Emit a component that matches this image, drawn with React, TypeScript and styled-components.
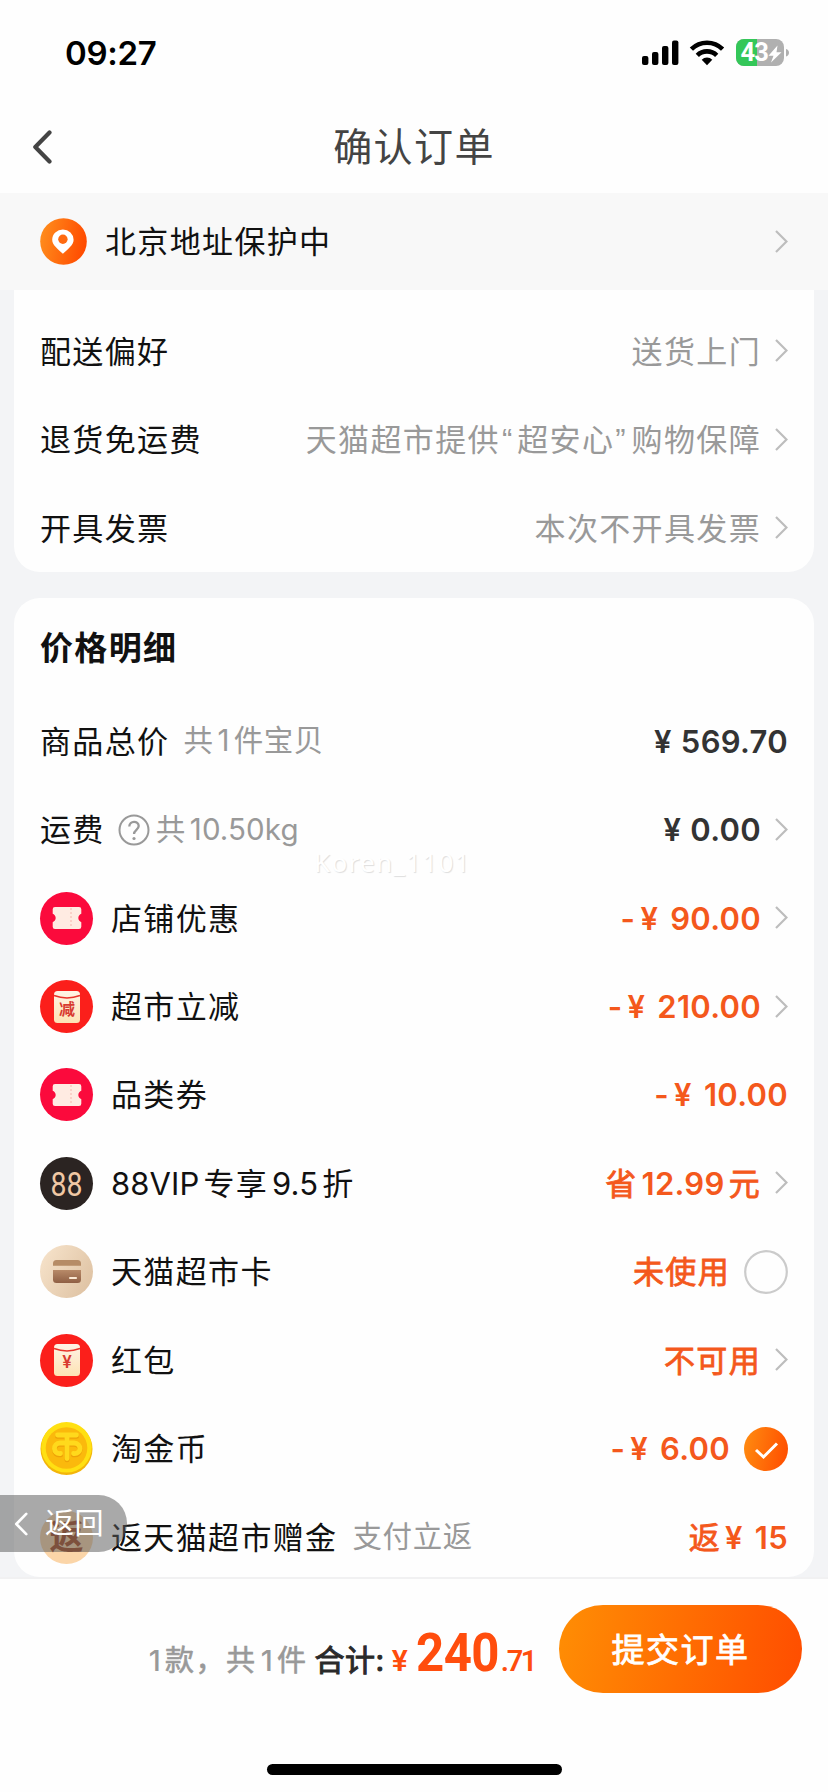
import React from 'react';
import styled, { createGlobalStyle } from 'styled-components';

const Global = createGlobalStyle`
  * { box-sizing: border-box; }
  body { margin: 0; background: #f3f4f6; }
`;

const ACCENT = '#f4581c';

const Page = styled.div`
  position: relative;
  width: 828px;
  height: 1792px;
  display: flex;
  flex-direction: column;
  overflow: hidden;
  background: #f3f4f6;
  font-family: Inter, 'Noto Sans CJK SC', sans-serif;
  font-size: 31px;
  letter-spacing: 1.35px;
  color: #111;
  line-height: 1;
  white-space: nowrap;
`;

const StatusBar = styled.div`
  flex: none;
  height: 100px;
  padding: 6px 39px 0 65px;
  display: flex;
  align-items: center;
  justify-content: space-between;
  background: #fefefe;
`;

const Clock = styled.span`
  font-size: 33px;
  font-weight: 600;
  letter-spacing: -0.3px;
  color: #000;
`;

const Header = styled.header`
  flex: none;
  height: 93px;
  padding: 0 32px;
  display: grid;
  grid-template-columns: 100px 1fr 100px;
  align-items: center;
  background: #fefefe;
`;

const Title = styled.h1`
  margin: 0;
  font-size: 39px;
  font-weight: 400;
  letter-spacing: 1.4px;
  text-align: center;
  color: #444;
`;

const AddressBar = styled.div`
  flex: none;
  height: 97px;
  padding: 0 40px;
  display: flex;
  align-items: center;
  gap: 18px;
  background: #f8f8f8;
`;

const Grow = styled.span`
  flex: 1;
`;

const Card = styled.section<{ $first?: boolean }>`
  flex: none;
  margin: 0 14px ${p => (p.$first ? 26 : 0)}px;
  padding: ${p => (p.$first ? '17px 26px' : '8px 26px 0')};
  height: ${p => (p.$first ? 282 : 979)}px;
  border-radius: ${p => (p.$first ? '0 0 26px 26px' : '26px')};
  background: #fefefe;
`;

const Row = styled.div`
  height: 88.45px;
  display: flex;
  align-items: center;
`;

const SectionTitle = styled.h2`
  margin: 0;
  height: 91px;
  padding-bottom: 6px;
  display: flex;
  align-items: center;
  font-size: 33px;
  font-weight: 600;
`;

const Latin = styled.span`
  letter-spacing: 0.1px;
  -webkit-text-stroke-width: 0;

  span + & { margin-left: 4px; }
  & + span { margin-left: 4px; }
`;

const Han = styled.span``;

const Quote = styled.span<{ $open: boolean }>`
  && { margin: ${p => (p.$open ? '0 5px 0 2px' : '0 6px 0 1px')}; }
  font-family: 'Liberation Sans', sans-serif;
  letter-spacing: 0;

  && + span { margin-left: 0; }
`;

const Label = styled.span<{ $icon?: boolean }>`
  margin-left: ${p => (p.$icon ? 18 : 0)}px;
  color: #111;
`;

const Note = styled.span<{ $gap: number }>`
  margin-left: ${p => p.$gap}px;
  font-size: 29.5px;
  letter-spacing: 0.6px;
  color: #999;
`;

const Value = styled.span<{ $tone: 'muted' | 'dark' | 'accent' }>`
  margin-left: auto;
  color: ${p => ({ muted: '#999', dark: '#333', accent: ACCENT }[p.$tone])};

  ${Latin} {
    font-weight: 600;
    letter-spacing: 0.3px;
  }
  ${Latin} + ${Latin} {
    margin-left: ${p => (p.$tone === 'accent' ? 12 : 9)}px;
  }
  ${Han} {
    -webkit-text-stroke: ${p => (p.$tone === 'accent' ? `0.8px ${ACCENT}` : '0')};
  }
`;

const Minus = styled.span`
  font-weight: 600;
`;

const Accessory = styled.span<{ $gap: number }>`
  margin-left: ${p => p.$gap}px;
  display: flex;
`;

const Badge = styled.span<{ $bg: string; $color?: string }>`
  width: 53px;
  height: 53px;
  border-radius: 50%;
  display: flex;
  align-items: center;
  justify-content: center;
  background: ${p => p.$bg};
  color: ${p => p.$color || '#fff'};
  letter-spacing: 0;
`;

const Rebate = styled.span`
  font-size: 34px;
  font-weight: 700;
`;

const Footer = styled.footer`
  flex: none;
  height: 215px;
  padding: 26px 0 17px;
  border-top: 2px solid #f1f1f2;
  background: #fefefe;
  display: flex;
  flex-direction: column;
  align-items: center;
  justify-content: space-between;
`;

const Checkout = styled.div`
  width: 100%;
  padding-right: 26px;
  display: flex;
  align-items: center;
  justify-content: flex-end;
`;

const Summary = styled.div`
  display: flex;
  align-items: baseline;
  padding-top: 7px;
  margin-right: 22px;
`;

const Count = styled.span`
  font-size: 29px;
  letter-spacing: 1.6px;
  color: #999;
  -webkit-text-stroke: 0.6px #999;

  ${Latin} { font-weight: 500; }
`;

const Total = styled.span`
  margin-left: 7px;
  font-size: 30px;
  letter-spacing: 0.5px;
  color: #2a2a2a;
  -webkit-text-stroke: 1px #2a2a2a;
`;

const Currency = styled.span`
  margin-left: 7px;
  font-family: Roboto, sans-serif;
  font-size: 30px;
  font-weight: 600;
  letter-spacing: 0;
  color: #ff4d0d;
`;

const Amount = styled.span`
  display: inline-block;
  margin: 0 -6px 0 8px;
  transform: scaleX(0.91);
  transform-origin: left;
  font-family: Roboto, sans-serif;
  font-size: 54px;
  font-weight: 700;
  letter-spacing: -0.6px;
  color: #ff4d0d;
`;

const Cents = styled.span`
  font-family: Roboto, sans-serif;
  font-size: 29px;
  font-weight: 600;
  letter-spacing: -2.4px;
  padding-right: 2px;
  color: #ff4d0d;
`;

const Submit = styled.button`
  width: 243px;
  height: 88px;
  border: 0;
  padding: 0 0 3px;
  border-radius: 44px;
  background: linear-gradient(100deg, #ff8e04, #ff4d00);
  color: #fff;
  font: 400 33px Inter, 'Noto Sans CJK SC', sans-serif;
  letter-spacing: 1.5px;
  -webkit-text-stroke: 0.8px #fff;
`;

const HomeIndicator = styled.div`
  width: 295px;
  height: 11px;
  border-radius: 6px;
  background: #000;
`;

const BackPill = styled.div`
  position: absolute;
  left: 0;
  top: 1495px;
  width: 127px;
  height: 57px;
  padding-left: 14px;
  display: flex;
  align-items: center;
  gap: 17px;
  border-radius: 0 29px 29px 0;
  background: rgba(90, 90, 90, 0.52);
  color: #fff;
  font-size: 29px;
  letter-spacing: 0.6px;
`;

const Watermark = styled.div`
  position: absolute;
  left: 314px;
  top: 849px;
  font-family: 'Noto Sans', sans-serif;
  font-size: 26px;
  letter-spacing: 1.3px;
  color: #fff;
  text-shadow: 1px 1px 1px #dedede;
`;

/* Sets Latin runs tighter than the Han text around them. */
const Mixed = ({ text }: { text: string }) => (
  <>
    {text.split(/([“”]|^-|\s+|[\x21-\x7e¥]+)/).filter(s => s.trim()).map((s, i) => {
      if (s === '-') return <Minus key={i}>{s}</Minus>;
      if (/[“”]/.test(s)) return <Quote key={i} $open={s === '“'}>{s}</Quote>;
      if (/^[\x21-\x7e¥]+$/.test(s)) return <Latin key={i}>{s}</Latin>;
      return <Han key={i}>{s}</Han>;
    })}
  </>
);

const Chevron = () => (
  <svg width="13" height="24" viewBox="0 0 13 24" fill="none" stroke="#bdbdbd" strokeWidth="2.2">
    <path d="M1 1L11.500 11.500L1 22" />
  </svg>
);

const BackArrow = ({ w, h, color, stroke }: { w: number; h: number; color: string; stroke: number }) => (
  <svg width={w} height={h} viewBox="0 0 20 34" fill="none" stroke={color} strokeWidth={stroke} strokeLinecap="round" strokeLinejoin="round">
    <path d="M17.500 2.500L3.300 17L17.500 31.500" />
  </svg>
);

const StatusIcons = () => (
  <svg width="148" height="30" viewBox="641 38 148 30">
    <g fill="#000">
      <rect x="642" y="56" width="6.400" height="9" rx="2" />
      <rect x="652" y="52" width="6.400" height="13" rx="2" />
      <rect x="662" y="46" width="6.400" height="19" rx="2" />
      <rect x="672" y="40.500" width="6.400" height="24.500" rx="2" />
      <path d="M707 65.200l-5.300-5.500a7.600 7.600 0 0 1 10.600 0z" />
    </g>
    <g fill="none" stroke="#000" strokeWidth="4.600">
      <path d="M697.300 55.400a13.800 13.800 0 0 1 19.400 0" />
      <path d="M691.400 49.200a22.200 22.200 0 0 1 31.200 0" />
    </g>
    <clipPath id="charge"><rect x="736" y="38" width="21" height="30" /></clipPath>
    <rect x="736" y="39" width="48" height="27" rx="8" fill="#b0b0b0" />
    <rect x="736" y="39" width="48" height="27" rx="8" fill="#34c759" clipPath="url(#charge)" />
    <path d="M786 49c4 1 4 6.500 0 7.500z" fill="#b0b0b0" />
    <text x="740.500" y="61.300" fontFamily="Roboto, sans-serif" fontSize="25.500" fontWeight="700" letterSpacing="-0.800" fill="#fff">43</text>
    <path d="M777.500 45.500L768.500 55.700H773.500L771 62.500L781.500 52.300H776.500Z" fill="#fff" />
  </svg>
);

const PinIcon = () => (
  <svg width="47" height="47" viewBox="0 0 47 47">
    <defs>
      <linearGradient id="pin" x1="0" y1="0.300" x2="1" y2="0.500">
        <stop offset="0" stopColor="#ff8d1c" />
        <stop offset="1" stopColor="#ff4a00" />
      </linearGradient>
    </defs>
    <circle cx="23.500" cy="23.500" r="23.300" fill="url(#pin)" />
    <path d="M22.900 35.800C17.500 30.800 12.200 27 12.200 21.800a10.700 10.200 0 0 1 21.400 0C33.600 27 28.300 30.800 22.900 35.800z" fill="#fff" />
    <circle cx="22.900" cy="21.300" r="4.700" fill="#ff6a10" />
  </svg>
);

const HelpIcon = () => (
  <svg width="32" height="32" viewBox="0 0 32 32" fill="none" stroke="#999" strokeWidth="2">
    <circle cx="16" cy="16" r="14.500" />
    <path d="M11.300 12.500c0-6.200 9.400-6.200 9.400-.4c0 3.600-4.700 4-4.700 8" strokeWidth="2.300" />
    <circle cx="16" cy="24.500" r="1.600" fill="#999" stroke="none" />
  </svg>
);

const TicketIcon = () => (
  <Badge $bg="#fb0a3c">
    <svg width="30" height="24" viewBox="0 0 30 24">
      <path d="M3 1h24a2.300 2.300 0 0 1 2.300 2.300v4.500c-1.300.6-3 2-3 4.200s1.700 3.600 3 4.200v4.500a2.300 2.300 0 0 1-2.300 2.300h-24a2.300 2.300 0 0 1-2.300-2.300v-4.500c1.300-.6 3-2 3-4.200s-1.700-3.600-3-4.200v-4.500a2.300 2.300 0 0 1 2.300-2.300z" fill="#ffebe2" />
      <path d="M19 2v20" stroke="#f6b6ae" strokeWidth="1" strokeDasharray="2 2" />
    </svg>
  </Badge>
);

const EnvelopeIcon = ({ mark, size }: { mark: string; size: number }) => (
  <Badge $bg="#fb1f1b">
    <svg width="28" height="34" viewBox="0 0 28 34">
      <defs>
        <linearGradient id="paper" x1="0" y1="0" x2="0" y2="1">
          <stop offset="0" stopColor="#fff3e6" />
          <stop offset="1" stopColor="#fde3b4" />
        </linearGradient>
      </defs>
      <rect x="1" y="1" width="26" height="32" rx="3.500" fill="url(#paper)" />
      <path d="M1 5.500c8 3 18 3 26 0" fill="none" stroke="#e8322a" strokeWidth="1.500" />
      <text x="14" y={19 + size * 0.38} textAnchor="middle" fontSize={size} fontWeight="600" fontFamily="Inter, 'Noto Sans CJK SC', sans-serif" fill="#d83a30">{mark}</text>
    </svg>
  </Badge>
);

const VipIcon = () => (
  <Badge $bg="#2b2422">
    <svg width="53" height="53" viewBox="0 0 53 53">
      <text x="10.500" y="38.500" textLength="32" lengthAdjust="spacingAndGlyphs" fontSize="34" fontFamily="Roboto, sans-serif" fill="#f0c8a4">88</text>
    </svg>
  </Badge>
);

const CardIcon = () => (
  <Badge $bg="linear-gradient(120deg, #f8e5cd, #dcbf9f)">
    <svg width="28" height="23" viewBox="0 0 28 23">
      <defs>
        <linearGradient id="wallet" x1="0" y1="0" x2="0" y2="1">
          <stop offset="0" stopColor="#b88a68" />
          <stop offset="1" stopColor="#8f5f44" />
        </linearGradient>
      </defs>
      <path d="M0 5.800V3.500A3.500 3.500 0 0 1 3.500 0h21A3.500 3.500 0 0 1 28 3.500v2.300z" fill="#b68c66" />
      <path d="M0 10h28v9.500a3.500 3.500 0 0 1-3.500 3.500h-21A3.500 3.500 0 0 1 0 19.500z" fill="url(#wallet)" />
      <path d="M17 18h6" stroke="#fbe9d4" strokeWidth="2.200" strokeLinecap="round" />
    </svg>
  </Badge>
);

const CoinIcon = () => (
  <svg width="53" height="53" viewBox="0 0 53 53" fill="none">
    <circle cx="26.500" cy="27" r="26" fill="#f3b50a" />
    <circle cx="26.500" cy="25.300" r="25.300" fill="#ffe012" />
    <circle cx="26.500" cy="26" r="20.800" fill="#fbb90c" />
    <g stroke="#eea208" strokeWidth="5" strokeLinecap="round" strokeLinejoin="round" transform="translate(0 1.300)">
      <path d="M17.500 13h19M27 13.500v23M20.500 31.500c-8 1-8-10.500-.5-10.500h14c8 0 8 11.500-.5 10.500" />
    </g>
    <g stroke="#ffd91c" strokeWidth="4.800" strokeLinecap="round" strokeLinejoin="round">
      <path d="M17.500 13h19M27 13.500v23M20.500 31.500c-8 1-8-10.500-.5-10.500h14c8 0 8 11.500-.5 10.500" />
    </g>
  </svg>
);

const Radio = () => (
  <svg width="44" height="44" viewBox="0 0 44 44" fill="none">
    <circle cx="22" cy="22" r="20.800" stroke="#cbcbcb" strokeWidth="2.200" />
  </svg>
);

const Checked = () => (
  <svg width="44" height="44" viewBox="0 0 44 44" fill="none">
    <defs>
      <linearGradient id="check" x1="0" y1="0.300" x2="1" y2="0.500">
        <stop offset="0" stopColor="#ff8a10" />
        <stop offset="1" stopColor="#ff5000" />
      </linearGradient>
    </defs>
    <circle cx="22" cy="22" r="22" fill="url(#check)" />
    <path d="M12 23l7.500 7L33 16.500" stroke="#fff" strokeWidth="3" />
  </svg>
);

type PriceRow = {
  icon: React.ReactNode;
  label: string;
  note?: string;
  value: string;
  end?: React.ReactNode;
  gap?: number;
};

const delivery = [
  ['配送偏好', '送货上门'],
  ['退货免运费', '天猫超市提供“超安心”购物保障'],
  ['开具发票', '本次不开具发票'],
];

const rows: PriceRow[] = [
  { icon: <TicketIcon />, label: '店铺优惠', value: '-¥ 90.00', end: <Chevron /> },
  { icon: <EnvelopeIcon mark="减" size={16} />, label: '超市立减', value: '-¥ 210.00', end: <Chevron /> },
  { icon: <TicketIcon />, label: '品类券', value: '-¥ 10.00' },
  { icon: <VipIcon />, label: '88VIP 专享 9.5 折', value: '省 12.99 元', end: <Chevron /> },
  { icon: <CardIcon />, label: '天猫超市卡', value: '未使用', end: <Radio />, gap: 14 },
  { icon: <EnvelopeIcon mark="¥" size={17} />, label: '红包', value: '不可用', end: <Chevron /> },
  { icon: <CoinIcon />, label: '淘金币', value: '-¥ 6.00', end: <Checked />, gap: 14 },
  { icon: <Badge $bg="#fbd5a8" $color="#a3461c"><Rebate>返</Rebate></Badge>, label: '返天猫超市赠金', note: '支付立返', value: '返 ¥ 15' },
];

export default function App() {
  return (
    <Page>
      <Global />
      <StatusBar>
        <Clock>09:27</Clock>
        <StatusIcons />
      </StatusBar>
      <Header>
        <BackArrow w={20} h={34} color="#444" stroke={4.2} />
        <Title>确认订单</Title>
      </Header>
      <AddressBar>
        <PinIcon />
        <span>北京地址保护中</span>
        <Grow />
        <Chevron />
      </AddressBar>
      <Card $first>
        {delivery.map(([label, value]) => (
          <Row key={label}>
            <Label>{label}</Label>
            <Value $tone="muted"><Mixed text={value} /></Value>
            <Accessory $gap={14}><Chevron /></Accessory>
          </Row>
        ))}
      </Card>
      <Card>
        <SectionTitle>价格明细</SectionTitle>
        <Row>
          <Label>商品总价</Label>
          <Note $gap={14}><Mixed text="共 1 件宝贝" /></Note>
          <Value $tone="dark"><Mixed text="¥ 569.70" /></Value>
        </Row>
        <Row>
          <Label>运费</Label>
          <Accessory $gap={13}><HelpIcon /></Accessory>
          <Note $gap={6}><Mixed text="共 10.50kg" /></Note>
          <Value $tone="dark"><Mixed text="¥ 0.00" /></Value>
          <Accessory $gap={14}><Chevron /></Accessory>
        </Row>
        {rows.map(r => (
          <Row key={r.label}>
            {r.icon}
            <Label $icon><Mixed text={r.label} /></Label>
            {r.note && <Note $gap={15}>{r.note}</Note>}
            <Value $tone="accent"><Mixed text={r.value} /></Value>
            {r.end && <Accessory $gap={r.gap ?? 14}>{r.end}</Accessory>}
          </Row>
        ))}
      </Card>
      <Footer>
        <Checkout>
          <Summary>
            <Count><Mixed text="1款，共 1 件" /></Count>
            <Total>合计:</Total>
            <Currency>¥</Currency>
            <Amount>240</Amount>
            <Cents>.71</Cents>
          </Summary>
          <Submit>提交订单</Submit>
        </Checkout>
        <HomeIndicator />
      </Footer>
      <Watermark>Koren_1101</Watermark>
      <BackPill>
        <BackArrow w={14} h={24} color="#fff" stroke={3.8} />
        <span>返回</span>
      </BackPill>
    </Page>
  );
}
